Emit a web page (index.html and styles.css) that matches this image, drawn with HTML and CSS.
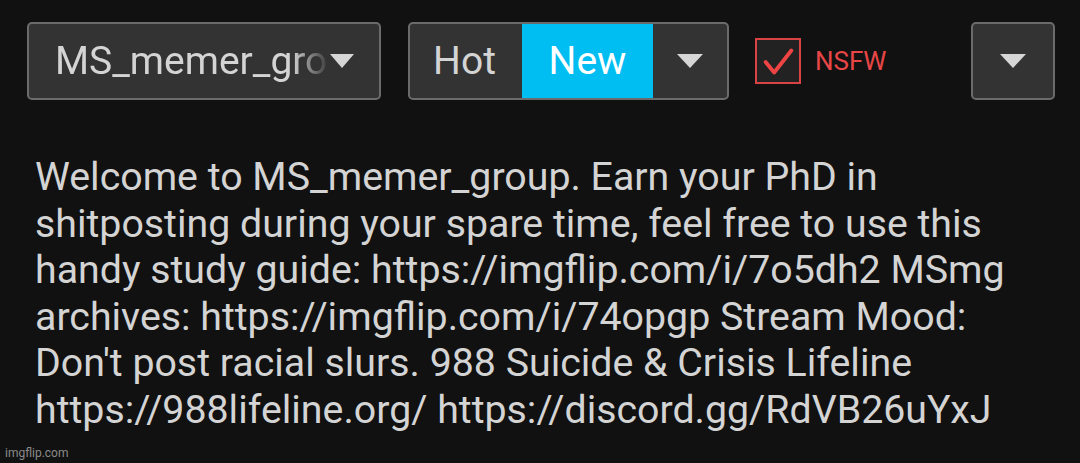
FILE: index.html
```html
<!DOCTYPE html>
<html lang="en">
<head>
    <meta charset="UTF-8">
    <meta name="viewport" content="width=device-width, initial-scale=1.0">
    <title>MS_memer_group</title>
    <link rel="stylesheet" href="styles.css">
</head>
<body>

    <div class="toolbar">

        <div class="btn stream-select">
            <span class="stream-name">MS_memer_group</span>
            <svg class="caret" width="24" height="14" viewBox="0 0 24 14"><polygon points="0,0 24,0 12,14" fill="#d6d6d6"/></svg>
        </div>

        <div class="btn-group">
            <div class="seg seg-hot">Hot</div>
            <div class="seg seg-new">New</div>
            <div class="seg seg-more">
                <svg class="caret" width="26" height="14" viewBox="0 0 26 14"><polygon points="0,0 26,0 13,14" fill="#d6d6d6"/></svg>
            </div>
        </div>

        <label class="nsfw">
            <span class="check-box">
                <svg width="44" height="44" viewBox="0 0 44 44"><polyline points="9,23 18,34 36,11" fill="none" stroke="#ee4444" stroke-width="4" stroke-linecap="round" stroke-linejoin="round"/></svg>
            </span>
            <span class="nsfw-text">NSFW</span>
        </label>

        <div class="btn btn-menu">
            <svg class="caret" width="26" height="14" viewBox="0 0 26 14"><polygon points="0,0 26,0 13,14" fill="#d6d6d6"/></svg>
        </div>

    </div>

    <p class="description">
        Welcome to MS_memer_group. Earn your PhD in shitposting during your spare time, feel free to use this handy study guide: https://imgflip.com/i/7o5dh2 MSmg archives: https://imgflip.com/i/74opgp Stream Mood: Don't post racial slurs. 988 Suicide &amp; Crisis Lifeline https://988lifeline.org/ https://discord.gg/RdVB26uYxJ
    </p>

    <div class="watermark">imgflip.com</div>

</body>
</html>
```

FILE: styles.css
```css
html, body {
    margin: 0;
    padding: 0;
    background: #111111;
    height: 100%;
}
body {
    font-family: Roboto, "Liberation Sans", sans-serif;
    color: #d4d4d4;
    position: relative;
    overflow: hidden;
}
.toolbar {
    display: flex;
    align-items: center;
    padding: 22px 25px 0 27px;
}
.btn {
    box-sizing: border-box;
    height: 78px;
    background: #333333;
    border: 2px solid #6b6b6b;
    border-radius: 5px;
    display: flex;
    align-items: center;
}
.stream-select {
    width: 354px;
    padding: 0 25px 0 26px;
    font-size: 39px;
}
.stream-name {
    flex: 1;
    overflow: hidden;
    white-space: nowrap;
    -webkit-mask-image: linear-gradient(to right, #000 86%, transparent 100%);
    mask-image: linear-gradient(to right, #000 86%, transparent 100%);
}
.caret {
    display: block;
    flex: none;
}
.btn-group {
    box-sizing: border-box;
    display: flex;
    height: 78px;
    margin-left: 27px;
    border: 2px solid #6b6b6b;
    border-radius: 5px;
    background: #333333;
    overflow: hidden;
}
.seg {
    display: flex;
    align-items: center;
    justify-content: center;
    font-size: 39px;
}
.seg-hot {
    width: 112px;
    padding-right: 3px;
    box-sizing: border-box;
}
.seg-new {
    width: 131px;
    margin-top: -2px;
    margin-bottom: -2px;
    background: #00bdf2;
    color: #ffffff;
}
.seg-more {
    width: 74px;
}
.nsfw {
    display: flex;
    align-items: center;
    margin-left: 26px;
}
.check-box {
    box-sizing: border-box;
    width: 46px;
    height: 46px;
    border: 2px solid #d94343;
    background: #222222;
    display: flex;
    align-items: center;
    justify-content: center;
}
.nsfw-text {
    margin-left: 14px;
    font-size: 26px;
    color: #e84646;
}
.btn-menu {
    width: 84px;
    margin-left: auto;
    justify-content: center;
}
.description {
    margin: 54px 0 0 35px;
    padding-right: 60px;
    font-size: 39.3px;
    line-height: 46.5px;
}
.watermark {
    position: absolute;
    left: 5px;
    bottom: 3px;
    font-size: 12px;
    color: #8a8a8a;
}
```
